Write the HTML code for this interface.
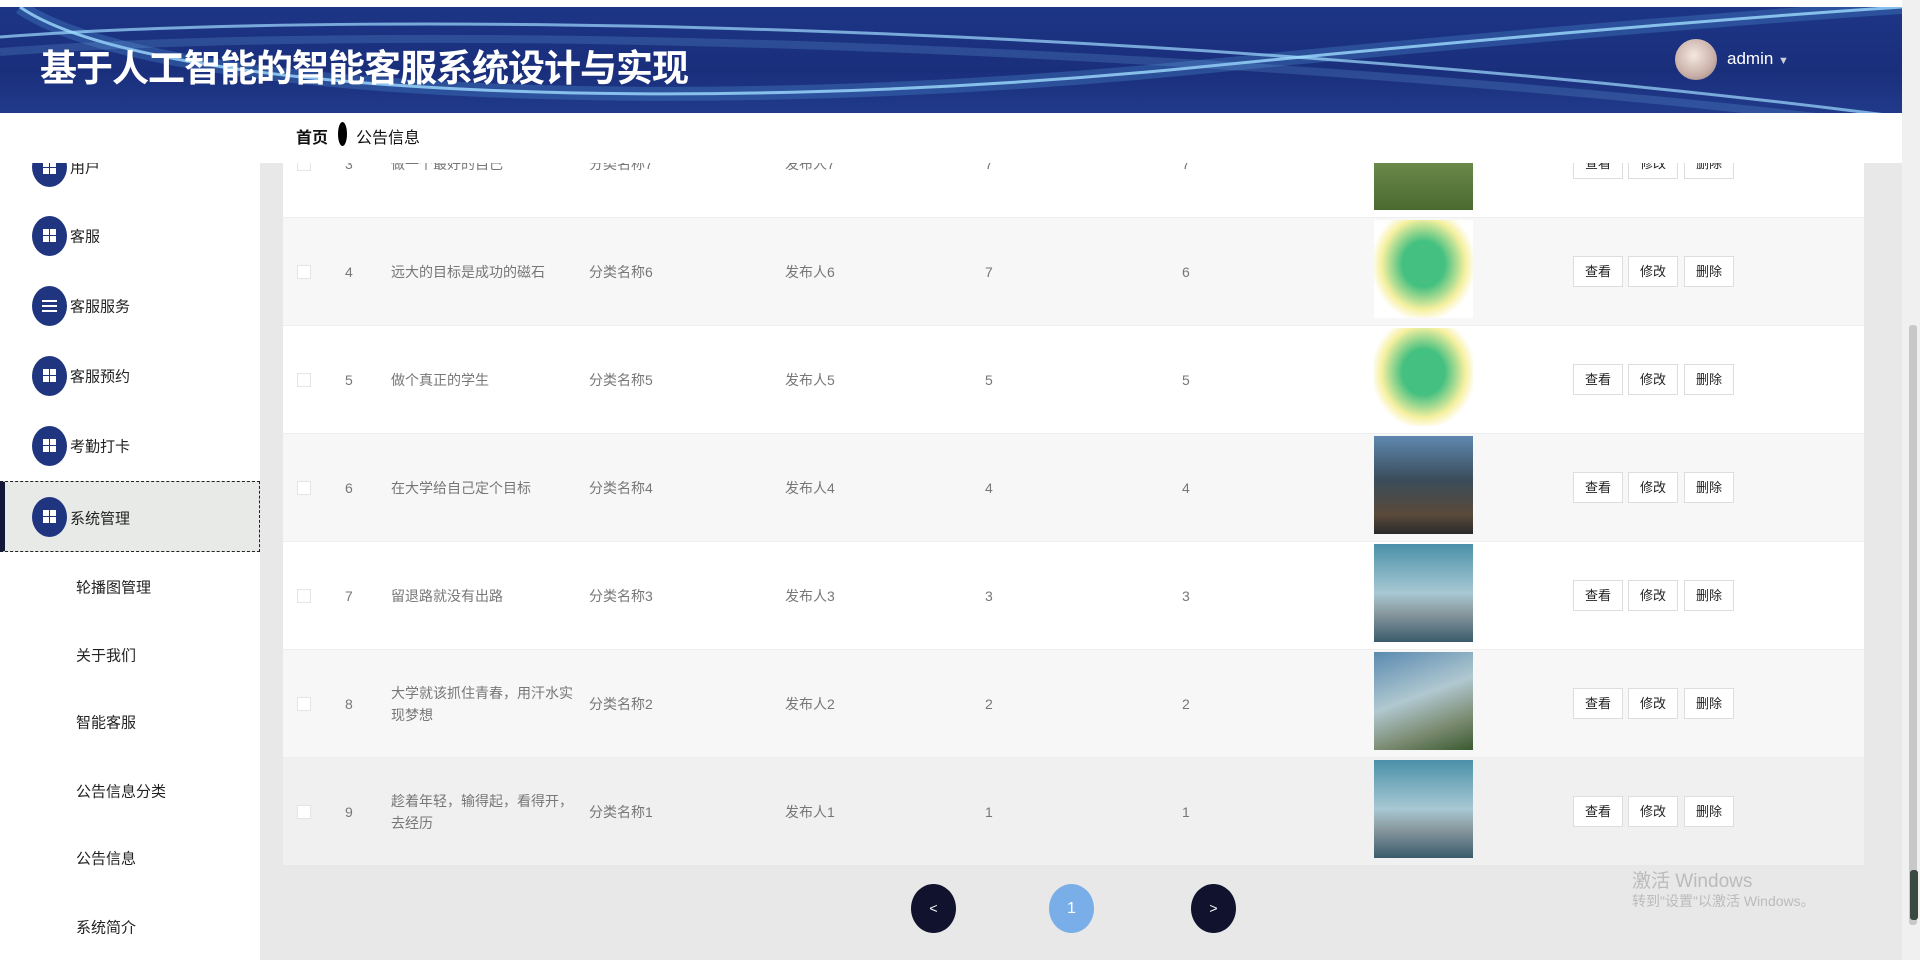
<!DOCTYPE html>
<html><head><meta charset="utf-8"><style>
*{margin:0;padding:0;box-sizing:border-box}
body{width:1920px;height:960px;overflow:hidden;background:#fff;font-family:"Liberation Sans","Noto Sans CJK SC",sans-serif;position:relative}
.hdr{position:absolute;left:0;top:7px;width:1902px;height:106px;background:linear-gradient(180deg,#1c3585 0%,#1a2f7c 60%,#203a8a 100%);overflow:hidden}
.title{position:absolute;left:40px;top:31px;color:#fff;font-size:37px;font-weight:bold;letter-spacing:-1px}
.side{position:absolute;left:0;top:113px;width:260px;height:847px;background:#fff;overflow:hidden}
.main{position:absolute;left:260px;top:113px;width:1642px;height:847px;background:#e8e8e8;overflow:hidden}
.bc{position:absolute;left:260px;top:113px;width:1642px;height:50px;background:#fff;z-index:5;font-size:16px}
.ico{position:absolute;left:32px;width:35px;height:40px;border-radius:50%;background:#1f3580}
.ico i{position:absolute;width:6px;height:6px;background:#fff}
.mi{position:absolute;left:70px;font-size:15px;color:#222;transform:translateY(-50%)}
.sub{position:absolute;left:76px;font-size:15px;color:#222;transform:translateY(-50%)}
.row{position:absolute;left:23px;width:1581px;height:108px;font-size:14px;color:#777}
.row span{position:absolute;top:50%;transform:translateY(-50%)}
.cb{position:absolute;left:14px;top:47px;width:14px;height:14px;border:1px solid #e4e4e4;background:#fff}
.img{position:absolute;left:1091px;top:2px;width:99px;height:98px}
.btn{position:absolute;top:38px;width:50px;height:31px;border:1px solid #ddd;background:#fff;color:#222;font-size:13px;text-align:center;line-height:29px}
.pg{position:absolute;top:884px;width:45px;height:49px;border-radius:50%;color:#fff;font-size:14px;text-align:center;line-height:49px}
</style></head><body>
<div class="hdr">
<svg width="1902" height="106" style="position:absolute;left:0;top:0">
<path d="M20,0 C150,90 700,110 1200,60 C1500,30 1750,10 1902,0" stroke="#5aa7e8" stroke-width="14" fill="none" opacity=".25"/>
<path d="M20,0 C150,90 700,110 1200,60 C1500,30 1750,10 1902,0" stroke="#9fdcff" stroke-width="3" fill="none" opacity=".8"/>
<path d="M0,30 C400,0 1200,20 1902,110" stroke="#9fdcff" stroke-width="3" fill="none" opacity=".7"/>
<path d="M0,45 C400,15 1200,35 1902,120" stroke="#7ab8ee" stroke-width="8" fill="none" opacity=".2"/>
</svg>
<div class="title">基于人工智能的智能客服系统设计与实现</div>
<div style="position:absolute;left:1675px;top:32px;width:42px;height:41px;border-radius:50%;background:radial-gradient(circle at 45% 40%,#f4e8e0,#c9b0a8 60%,#8a7a78)"></div>
<div style="position:absolute;left:1727px;top:42px;color:#fff;font-size:17px">admin <span style="font-size:11px;color:#ccd">▼</span></div>
</div>
<div style="position:absolute;left:1902px;top:0;width:18px;height:960px;background:#f0f0f0"></div>
<div style="position:absolute;left:1909px;top:325px;width:8px;height:600px;background:#c8c8c8;border-radius:3px"></div>
<div style="position:absolute;left:1910px;top:870px;width:8px;height:50px;background:#3a4a40;border-radius:3px"></div>

<div class="side">
<div class="ico" style="top:34px"><i style="left:11px;top:14px"></i><i style="left:18px;top:14px"></i><i style="left:11px;top:21px"></i><i style="left:18px;top:21px"></i></div><div class="mi" style="top:54px">用户</div>
<div style="position:absolute;left:0;top:0;width:260px;height:50px;background:#fff"></div>
<div class="ico" style="top:103px"><i style="left:11px;top:13px"></i><i style="left:18px;top:13px"></i><i style="left:11px;top:20px"></i><i style="left:18px;top:20px"></i></div><div class="mi" style="top:123px">客服</div>
<div class="ico" style="top:173px"><i style="left:10px;top:14px;width:15px;height:2px"></i><i style="left:10px;top:19px;width:15px;height:2px"></i><i style="left:10px;top:24px;width:15px;height:2px"></i></div><div class="mi" style="top:193px">客服服务</div>
<div class="ico" style="top:243px"><i style="left:11px;top:13px"></i><i style="left:18px;top:13px"></i><i style="left:11px;top:20px"></i><i style="left:18px;top:20px"></i></div><div class="mi" style="top:263px">客服预约</div>
<div class="ico" style="top:313px"><i style="left:11px;top:13px"></i><i style="left:18px;top:13px"></i><i style="left:11px;top:20px"></i><i style="left:18px;top:20px"></i></div><div class="mi" style="top:333px">考勤打卡</div>
<div style="position:absolute;left:0;top:368px;width:260px;height:71px;background:#e8eae8;border:1px dashed #222;border-left:5px solid #141838"></div>
<div class="ico" style="top:384px"><i style="left:11px;top:13px"></i><i style="left:18px;top:13px"></i><i style="left:11px;top:20px"></i><i style="left:18px;top:20px"></i></div><div class="mi" style="top:405px">系统管理</div>
<div class="sub" style="top:474px">轮播图管理</div>
<div class="sub" style="top:542px">关于我们</div>
<div class="sub" style="top:609px">智能客服</div>
<div class="sub" style="top:678px">公告信息分类</div>
<div class="sub" style="top:745px">公告信息</div>
<div class="sub" style="top:814px">系统简介</div>
</div>

<div class="bc"><span style="position:absolute;left:36px;top:11px;font-weight:bold;color:#111">首页</span><span style="position:absolute;left:78px;top:9px;width:9px;height:24px;border-radius:50%;background:#000"></span><span style="position:absolute;left:96px;top:11px;color:#111">公告信息</span></div>

<div class="main">
<div style="position:absolute;left:23px;top:0;width:1581px;height:750px;background:#fff"></div>
<div class="row" style="top:-3px;background:#fff"><div class="cb"></div><span style="left:62px">3</span><span style="left:108px">做一个最好的自己</span><span style="left:306px">分类名称7</span><span style="left:502px">发布人7</span><span style="left:702px">7</span><span style="left:899px">7</span><div class="img" style="background:linear-gradient(180deg,#9bb0a0,#6b8a4a 50%,#4a6a30)"></div><div class="btn" style="left:1290px">查看</div><div class="btn" style="left:1345px">修改</div><div class="btn" style="left:1401px">删除</div></div>
<div class="row" style="top:104px;background:#f7f7f7;border-top:1px solid #eee"><div class="cb"></div><span style="left:62px">4</span><span style="left:108px">远大的目标是成功的磁石</span><span style="left:306px">分类名称6</span><span style="left:502px">发布人6</span><span style="left:702px">7</span><span style="left:899px">6</span><div class="img" style="background:radial-gradient(ellipse at 50% 45%,#44c080 30%,#f6f0a0 60%,#fff 75%)"></div><div class="btn" style="left:1290px">查看</div><div class="btn" style="left:1345px">修改</div><div class="btn" style="left:1401px">删除</div></div>
<div class="row" style="top:212px;background:#fff;border-top:1px solid #eee"><div class="cb"></div><span style="left:62px">5</span><span style="left:108px">做个真正的学生</span><span style="left:306px">分类名称5</span><span style="left:502px">发布人5</span><span style="left:702px">5</span><span style="left:899px">5</span><div class="img" style="background:radial-gradient(ellipse at 50% 45%,#44c080 30%,#f6f0a0 60%,#fff 75%)"></div><div class="btn" style="left:1290px">查看</div><div class="btn" style="left:1345px">修改</div><div class="btn" style="left:1401px">删除</div></div>
<div class="row" style="top:320px;background:#f7f7f7;border-top:1px solid #eee"><div class="cb"></div><span style="left:62px">6</span><span style="left:108px">在大学给自己定个目标</span><span style="left:306px">分类名称4</span><span style="left:502px">发布人4</span><span style="left:702px">4</span><span style="left:899px">4</span><div class="img" style="background:linear-gradient(180deg,#5f88b0,#3a4c5a 45%,#5a4a3a 80%,#2a2a2a)"></div><div class="btn" style="left:1290px">查看</div><div class="btn" style="left:1345px">修改</div><div class="btn" style="left:1401px">删除</div></div>
<div class="row" style="top:428px;background:#fff;border-top:1px solid #eee"><div class="cb"></div><span style="left:62px">7</span><span style="left:108px">留退路就没有出路</span><span style="left:306px">分类名称3</span><span style="left:502px">发布人3</span><span style="left:702px">3</span><span style="left:899px">3</span><div class="img" style="background:linear-gradient(180deg,#4a90a8,#a8c8d4 50%,#8a9aa0 70%,#3a5a6a)"></div><div class="btn" style="left:1290px">查看</div><div class="btn" style="left:1345px">修改</div><div class="btn" style="left:1401px">删除</div></div>
<div class="row" style="top:536px;background:#f7f7f7;border-top:1px solid #eee"><div class="cb"></div><span style="left:62px">8</span><span style="left:108px;line-height:22px">大学就该抓住青春，用汗水实<br>现梦想</span><span style="left:306px">分类名称2</span><span style="left:502px">发布人2</span><span style="left:702px">2</span><span style="left:899px">2</span><div class="img" style="background:linear-gradient(160deg,#5a8ab0,#b0c8d0 45%,#7a8a70 75%,#3a5a30)"></div><div class="btn" style="left:1290px">查看</div><div class="btn" style="left:1345px">修改</div><div class="btn" style="left:1401px">删除</div></div>
<div class="row" style="top:644px;background:#f0f0f0;border-top:1px solid #eee"><div class="cb"></div><span style="left:62px">9</span><span style="left:108px;line-height:22px">趁着年轻，输得起，看得开，<br>去经历</span><span style="left:306px">分类名称1</span><span style="left:502px">发布人1</span><span style="left:702px">1</span><span style="left:899px">1</span><div class="img" style="background:linear-gradient(180deg,#4a90a8,#a8c8d4 50%,#8a9aa0 70%,#3a5a6a)"></div><div class="btn" style="left:1290px">查看</div><div class="btn" style="left:1345px">修改</div><div class="btn" style="left:1401px">删除</div></div>
</div>
<div class="pg" style="left:911px;background:#10122e">&lt;</div>
<div class="pg" style="left:1049px;background:#7aaee8;font-size:16px">1</div>
<div class="pg" style="left:1191px;background:#10122e">&gt;</div>
<div style="position:absolute;left:1632px;top:866px;color:#bbb;font-size:19px">激活 Windows</div>
<div style="position:absolute;left:1632px;top:891px;color:#bbb;font-size:14px">转到"设置"以激活 Windows。</div>
</body></html>
